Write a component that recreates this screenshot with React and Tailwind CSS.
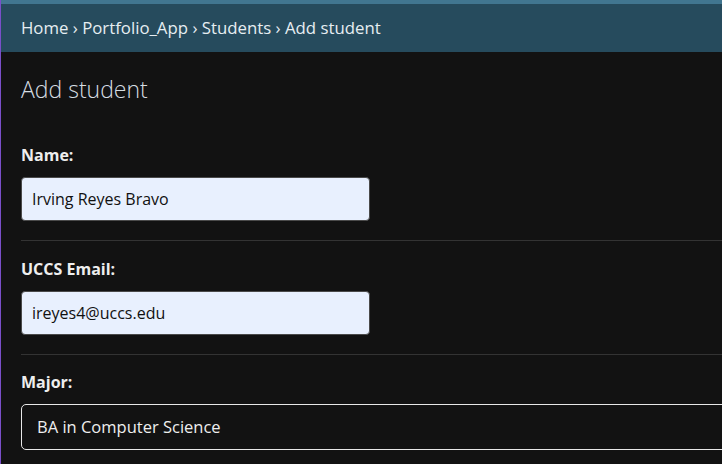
import React from "react";

const font = { fontFamily: '"Open Sans", "Noto Sans", Arial, sans-serif' };

function Field({ label, children, first, top = "pt-[18px]" }) {
    return (
        <div className={first ? "" : "border-t border-[#333333]"}>
            <div className={(first ? "pt-[40px]" : top) + " pb-[19px]"}>
                <label className="block h-5 leading-5 text-[16px] font-bold text-[#eeeeee]">{label}</label>
                <div className="mt-3">{children}</div>
            </div>
        </div>
    );
}

export default function App() {
    return (
        <div className="w-[722px] h-[464px] overflow-hidden bg-[#121212] border-l border-[#7a4fc9]" style={font}>
            <div className="h-1 bg-[#417690]" />
            <div className="h-12 bg-[#264b5d] flex items-center pl-5 text-[16.8px] text-[#e6eef2] whitespace-nowrap">
                Home › Portfolio_App › Students › Add student
            </div>

            <div className="pl-5">
                <h1 className="mt-[21px] h-8 leading-8 text-[23px] font-light text-[#d6dde2]">Add student</h1>

                <Field label="Name:" first>
                    <div className="w-[349px] h-[44px] rounded bg-[#e8f0fe] border border-[#4a4a4a] flex items-center pl-[10px] text-[16px] text-[#111111]">
                        Irving Reyes Bravo
                    </div>
                </Field>

                <Field label="UCCS Email:">
                    <div className="w-[349px] h-[44px] rounded bg-[#e8f0fe] border border-[#4a4a4a] flex items-center pl-[10px] text-[16px] text-[#111111]">
                        ireyes4@uccs.edu
                    </div>
                </Field>

                <Field label="Major:" top="pt-[17px]">
                    <div className="w-[760px] h-[46px] rounded-[5px] border border-[#e8e8e8] flex items-center pl-[15px] text-[16.5px] text-[#eeeeee]">
                        BA in Computer Science
                    </div>
                </Field>
            </div>
        </div>
    );
}
